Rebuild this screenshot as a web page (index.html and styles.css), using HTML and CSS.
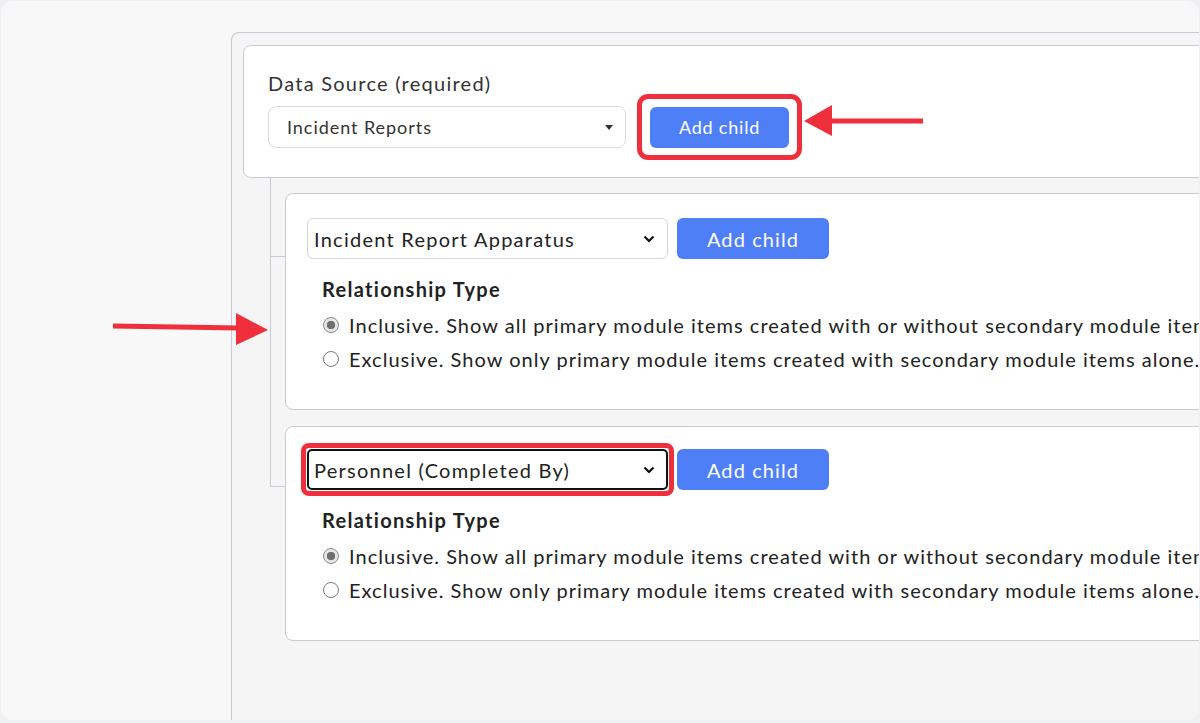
FILE: index.html
```html
<!DOCTYPE html>
<html lang="en">
<head>
    <meta charset="UTF-8">
    <meta name="viewport" content="width=device-width, initial-scale=1.0">
    <title>Data Source Builder</title>
    <link rel="stylesheet" href="styles.css">
</head>
<body>
    <div class="frame">
        <div class="panel">

            <!-- Root data source -->
            <div class="card source-card">
                <div class="field-label">Data Source (required)</div>
                <div class="row">
                    <div class="pick pick-main">
                        <span>Incident Reports</span>
                        <svg class="caret" width="8" height="5" viewBox="0 0 8 5"><path d="M0 0h8L4 5z" fill="#333"/></svg>
                    </div>
                    <span class="mark mark-btn">
                        <button class="btn btn-main">Add child</button>
                    </span>
                </div>
            </div>

            <!-- Child modules -->
            <ul class="children">
                <li class="child">
                    <div class="card child-card">
                        <div class="row">
                            <div class="pick">
                                <span>Incident Report Apparatus</span>
                                <svg class="chev" width="12" height="8" viewBox="0 0 12 8"><path d="M1.5 1.5l4.5 4.5 4.5-4.5" fill="none" stroke="#111" stroke-width="2.2"/></svg>
                            </div>
                            <button class="btn">Add child</button>
                        </div>
                        <div class="rel-title">Relationship Type</div>
                        <div class="opt"><span class="radio on"></span>Inclusive. Show all primary module items created with or without secondary module items.</div>
                        <div class="opt"><span class="radio"></span>Exclusive. Show only primary module items created with secondary module items alone.</div>
                    </div>
                </li>
                <li class="child">
                    <div class="card child-card">
                        <div class="row">
                            <span class="mark mark-pick">
                                <div class="pick focused">
                                    <span>Personnel (Completed By)</span>
                                    <svg class="chev" width="12" height="8" viewBox="0 0 12 8"><path d="M1.5 1.5l4.5 4.5 4.5-4.5" fill="none" stroke="#111" stroke-width="2.2"/></svg>
                                </div>
                            </span>
                            <button class="btn">Add child</button>
                        </div>
                        <div class="rel-title">Relationship Type</div>
                        <div class="opt"><span class="radio on"></span>Inclusive. Show all primary module items created with or without secondary module items.</div>
                        <div class="opt"><span class="radio"></span>Exclusive. Show only primary module items created with secondary module items alone.</div>
                    </div>
                </li>
            </ul>
        </div>

        <!-- Callout arrows -->
        <svg class="callouts" width="1200" height="723" viewBox="0 0 1200 723">
            <line x1="923" y1="121" x2="828" y2="121" stroke="#ef2f3c" stroke-width="5"/>
            <polygon points="804,121 832,105 832,136" fill="#ef2f3c"/>
            <line x1="113" y1="326" x2="240" y2="328" stroke="#ef2f3c" stroke-width="5"/>
            <polygon points="268,330 236,313 236,345" fill="#ef2f3c"/>
        </svg>
    </div>
</body>
</html>
```

FILE: styles.css
```css
body {
    margin: 0;
    background-color: #eff0f3;
    font-family: Lato, "Open Sans", Arial, sans-serif;
    color: #333;
}

.frame {
    position: relative;
    width: 1198px;
    height: 719px;
    margin: 1px;
    border-radius: 12px;
    background-color: #f8f8f9;
    overflow: hidden;
}

.panel {
    width: 1100px;
    height: 760px;
    margin: 31px 0 0 230px;
    padding: 12px 0 0 11px;
    background-color: #f5f5f5;
    border-top: 1px solid #c9cbd4;
    border-left: 1px solid #c9cbd4;
    border-top-left-radius: 8px;
    box-sizing: border-box;
}

.card {
    background-color: #fff;
    border: 1px solid #c9cbd4;
    border-radius: 8px;
}

.source-card {
    padding: 25px 24px 29px;
}

.field-label {
    font-size: 20px;
    letter-spacing: 1.25px;
    line-height: 24px;
    margin-bottom: 11px;
}

.row {
    display: flex;
    align-items: center;
}

.pick {
    display: flex;
    align-items: center;
    justify-content: space-between;
    box-sizing: border-box;
    width: 361px;
    height: 41px;
    padding: 0 12px 0 6px;
    border: 1px solid #d6d6d6;
    border-radius: 6px;
    font-size: 20px;
    letter-spacing: 1.25px;
    color: #222;
    background-color: #fff;
}

.pick-main {
    width: 358px;
    height: 42px;
    padding: 0 12px 0 18px;
    border-color: #dcdcdc;
    border-radius: 8px;
    font-size: 18px;
    letter-spacing: 0.95px;
    color: #333;
}

.pick.focused {
    border: 2px solid #111;
    border-radius: 5px;
    padding: 0 11px 0 5px;
}

.btn {
    height: 41px;
    width: 152px;
    margin-left: 9px;
    border: none;
    border-radius: 6px;
    background-color: #4f7ff7;
    color: #fff;
    font-family: inherit;
    font-size: 20px;
    letter-spacing: 1.1px;
    padding: 0;
}

.btn-main {
    width: 139px;
    margin-left: 0;
    font-size: 18px;
    letter-spacing: 0.8px;
}

/* red highlight rings drawn around marked controls */
.mark {
    position: relative;
    display: inline-flex;
}

.mark::after {
    content: '';
    position: absolute;
    border: 5px solid #ef2f3c;
    pointer-events: none;
}

.mark-btn {
    margin-left: 24px;
}

.mark-btn::after {
    inset: -13px -13px -12px -13px;
    border-radius: 11px;
}

.mark-pick::after {
    inset: -6px -6px -6px -6px;
    border-radius: 8px;
}

/* tree of child modules */
.children {
    list-style: none;
    margin: 0;
    padding: 0;
}

.child {
    position: relative;
    margin-left: 27px;
    padding: 15px 0 0 15px;
}

.child + .child {
    padding-top: 16px;
}

.child::before {
    content: '';
    position: absolute;
    left: 0;
    top: 0;
    width: 15px;
    height: 78px;
    border-left: 1px solid #c9cbd4;
    border-bottom: 1px solid #c9cbd4;
}

.child + .child::before {
    height: 76px;
}

.child:not(:last-child)::after {
    content: '';
    position: absolute;
    left: 0;
    top: 0;
    bottom: 0;
    border-left: 1px solid #c9cbd4;
}

.child-card {
    padding: 24px 21px 33px;
    color: #222;
}

.child + .child .child-card {
    padding-top: 22px;
}

.rel-title {
    margin: 18px 0 7px 15px;
    font-size: 20px;
    letter-spacing: 1.3px;
    font-weight: bold;
    line-height: 24px;
}

.opt {
    display: flex;
    align-items: center;
    margin-left: 15px;
    height: 34px;
    font-size: 20px;
    letter-spacing: 1.02px;
    white-space: nowrap;
}

.radio {
    box-sizing: border-box;
    width: 16px;
    height: 16px;
    margin: 0 10px 0 1px;
    border: 1px solid #7a7a7a;
    border-radius: 50%;
    background-color: #fff;
}

.radio.on {
    border-color: #8c8c8c;
    background: radial-gradient(circle, #6f6f6f 0 4px, #e6e6e6 4.5px);
}

.callouts {
    position: absolute;
    left: -1px;
    top: -1px;
    pointer-events: none;
}
```
